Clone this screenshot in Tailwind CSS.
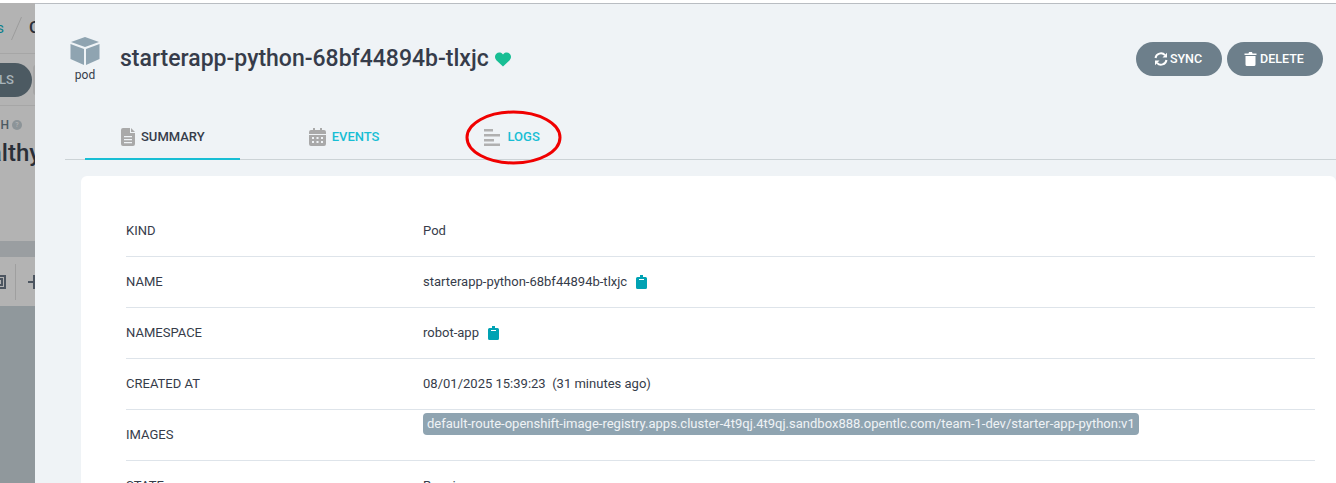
<!DOCTYPE html>
<html lang="en">
	<head>
		<meta charset="UTF-8" />
		<title>Pod details</title>
		<script src="https://cdn.jsdelivr.net/npm/@tailwindcss/browser@4"></script>
	</head>
	<body class="bg-white font-['Roboto',sans-serif] text-[#363c4a]">
		<div class="h-[483px] overflow-hidden pt-[3px]">
			<div class="flex h-[480px] overflow-hidden">
				<!-- dimmed page behind the sliding panel -->
				<div class="w-[35px] shrink-0 overflow-hidden bg-[#b3b3b3] flex flex-col text-[#2a2f38]">
					<div class="h-[51px] w-full flex items-center border-b border-[#a6a6a6] whitespace-nowrap">
						<div class="w-[4px] overflow-hidden flex justify-end text-[15px] text-[#0a7f8c]">s</div>
						<svg class="ml-[7px] shrink-0" width="11" height="23" viewBox="0 0 11 23"><path d="M.5 23 10.500 0" stroke="#9c9c9c" fill="none" /></svg>
						<div class="ml-[7px] w-[6px] overflow-hidden text-[17px] font-medium">C</div>
					</div>
					<div class="h-[52px] w-full flex items-center border-b border-[#a6a6a6]">
						<div class="w-[32px] h-[34px] shrink-0 rounded-r-[17px] bg-[#4c5a62] text-[#a9b4ba] text-[13px] font-medium flex items-center justify-end pr-[18px]">LS</div>
						<div class="w-[3px] h-[30px] shrink-0 ml-[1px] rounded-l-[3px] bg-[#a6a6a6]"></div>
					</div>
					<div class="h-[135px] w-full whitespace-nowrap">
						<div class="mt-[11px] h-[16px] flex items-center text-xs font-medium text-[#4c5a62]">
							<div class="w-[9px] overflow-hidden flex justify-end">H</div>
							<div class="ml-[3px] w-[10px] h-[10px] rounded-full bg-[#8c9498] text-[7px] leading-[10px] text-center text-[#b3b3b3]">?</div>
						</div>
						<div class="mt-[5px] h-[30px] flex justify-end text-[24px] leading-[30px] font-medium">
							<span class="-mr-[6px]">althy</span>
						</div>
					</div>
					<div class="h-[16px] w-full bg-[#9a9ea1]"></div>
					<div class="h-[49px] w-full flex items-center">
						<svg width="6" height="16" viewBox="0 0 6 16" class="shrink-0"><path d="M-4 2H5V14H-4M-4 5H2V11H-4" stroke="#4c5560" stroke-width="2" fill="none" /></svg>
						<div class="ml-[9px] w-[1px] h-[36px] bg-[#9f9f9f] shrink-0"></div>
						<svg width="8" height="14" viewBox="0 0 8 14" class="shrink-0 ml-[12px]"><path d="M0 7H8M6 0V14" stroke="#4c5560" stroke-width="2" fill="none" /></svg>
					</div>
					<div class="flex-1 w-full bg-[#90989c]"></div>
				</div>

				<!-- sliding panel -->
				<div class="flex-1 min-w-0 bg-[#eff3f6] border-t border-[#b9bdc2]">
					<div class="h-[104px] flex items-start justify-between pr-[13px]">
						<div class="flex items-start">
							<div class="w-[85px] pl-[35px] pr-[20px] pt-[32px] flex flex-col items-center">
								<svg class="shrink-0" width="30" height="30" viewBox="0 0 30 30">
									<path d="M15 1 29 6 15 11 1 6Z" fill="#8fa4b1" />
									<path d="M0.500 8 14 13V29L0.500 23Z" fill="#8fa4b1" />
									<path d="M29.500 8 16 13V29L29.500 23Z" fill="#8fa4b1" />
								</svg>
								<div class="text-xs leading-[15px] mt-[2px]">pod</div>
							</div>
							<div class="pt-[40px] flex items-center">
								<h1 class="text-[23px] leading-[29px] font-medium whitespace-nowrap">starterapp-python-68bf44894b-tlxjc</h1>
								<svg class="ml-[6px] mt-[2px]" width="16" height="15" viewBox="0 0 17 15"><path d="M8.500 15 1.400 8.200C-.5 6.200-.4 3 1.400 1.300 3.300-.4 6.200-.3 8 1.600l.5.6.5-.6c1.800-1.900 4.700-2 6.600-.3 1.800 1.700 1.900 4.900 0 6.900Z" fill="#18be94" /></svg>
							</div>
						</div>
						<div class="pt-[38px] flex gap-[5px]">
							<button class="h-[34px] w-[86px] pr-[2px] rounded-[17px] bg-[#6d7f8b] text-white text-[12.5px] font-medium flex items-center justify-center gap-[2px]">
								<svg width="14" height="14" viewBox="0 0 14 14" fill="none" stroke="#fff" stroke-width="2"><path d="M1.500 6A5.500 5.500 0 0 1 11 3.200" /><path d="M12.500 8A5.500 5.500 0 0 1 3 10.800" /><path d="M13 .8V5.400H8.500Z" fill="#fff" stroke="none" /><path d="M1 13.200V8.600H5.500Z" fill="#fff" stroke="none" /></svg>
								SYNC
							</button>
							<button class="h-[34px] w-[96px] pr-[2px] rounded-[17px] bg-[#6d7f8b] text-white text-[12.5px] font-medium flex items-center justify-center gap-[3px]">
								<svg class="-mt-[1px]" width="13" height="15" viewBox="0 0 12 15"><path d="M0 2.500H12V4H0ZM4 2.500 4.500 1H7.500L8 2.500ZM1 5H11V13.500A1.500 1.500 0 0 1 9.500 15H2.500A1.500 1.500 0 0 1 1 13.500Z" fill="#fff" /></svg>
								DELETE
							</button>
						</div>
					</div>

					<div class="ml-[30px] pl-[20px] h-[52px] border-b border-[#ccd3d6] flex gap-[33px] text-[13px] font-medium">
						<div class="pl-[36px] pr-[35px] h-[52px] pt-[8px] border-b-2 border-[#18bed4] flex items-center gap-[6px]">
							<svg width="14" height="18" viewBox="0 0 14 18"><path d="M2 0H9V5H14V16A2 2 0 0 1 12 18H2A2 2 0 0 1 0 16V2A2 2 0 0 1 2 0ZM10 0 14 4H10ZM3 8V9.200H11V8ZM3 11V12.200H11V11ZM3 14V15.200H11V14Z" fill="#a9a9a9" fill-rule="evenodd" /></svg>
							SUMMARY
						</div>
						<div class="px-[36px] h-[52px] pt-[6px] flex items-center gap-[6px] text-[#18bed4]">
							<svg width="17" height="18" viewBox="0 0 17 18"><path d="M4 0H6V2H11V0H13V2H15A2 2 0 0 1 17 4V6H0V4A2 2 0 0 1 2 2H4ZM0 7H17V16A2 2 0 0 1 15 18H2A2 2 0 0 1 0 16ZM3 9V11H5V9ZM7.500 9V11H9.500V9ZM12 9V11H14V9ZM3 13V15H5V13ZM7.500 13V15H9.500V13ZM12 13V15H14V13Z" fill="#a9a9a9" fill-rule="evenodd" /></svg>
							EVENTS
						</div>
						<div class="px-[36px] h-[52px] pt-[6px] flex items-center gap-[7px] text-[#18bed4]">
							<svg width="16" height="17" viewBox="0 0 16 17" fill="#b0b0b0"><rect width="9" height="2.500" y="0" /><rect width="16" height="2.500" y="5" /><rect width="10" height="2.500" y="10" /><rect width="16" height="2.500" y="14.500" /></svg>
							LOGS
						</div>
					</div>

					<div class="ml-[46px] mt-[16px] h-[400px] bg-white rounded-t-[6px] pl-[45px] pr-[21px] pt-[30px] text-[13.02px]">
						<div class="h-[51px] border-b border-[#dee4ea] flex items-center">
							<div class="w-[297px]">KIND</div>
							<div>Pod</div>
						</div>
						<div class="h-[51px] border-b border-[#dee4ea] flex items-center">
							<div class="w-[297px]">NAME</div>
							<div>starterapp-python-68bf44894b-tlxjc</div>
							<svg class="ml-[9px]" width="11" height="14" viewBox="0 0 11 14"><path d="M4 0H7V2H9.500A1.500 1.500 0 0 1 11 3.500V12.500A1.500 1.500 0 0 1 9.500 14H1.500A1.500 1.500 0 0 1 0 12.500V3.500A1.500 1.500 0 0 1 1.500 2H4ZM3 4V5H8V4Z" fill="#00a2b3" fill-rule="evenodd" /></svg>
						</div>
						<div class="h-[51px] border-b border-[#dee4ea] flex items-center">
							<div class="w-[297px]">NAMESPACE</div>
							<div>robot-app</div>
							<svg class="ml-[9px]" width="11" height="14" viewBox="0 0 11 14"><path d="M4 0H7V2H9.500A1.500 1.500 0 0 1 11 3.500V12.500A1.500 1.500 0 0 1 9.500 14H1.500A1.500 1.500 0 0 1 0 12.500V3.500A1.500 1.500 0 0 1 1.500 2H4ZM3 4V5H8V4Z" fill="#00a2b3" fill-rule="evenodd" /></svg>
						</div>
						<div class="h-[51px] border-b border-[#dee4ea] flex items-center">
							<div class="w-[297px]">CREATED AT</div>
							<div class="whitespace-pre">08/01/2025 15:39:23  (31 minutes ago)</div>
						</div>
						<div class="h-[51px] border-b border-[#dee4ea] flex items-center">
							<div class="w-[297px]">IMAGES</div>
							<div class="self-start mt-[3px] h-[22px] leading-[22px] px-[4px] rounded-[4px] bg-[#8fa4b1] text-[#eff3f6] whitespace-nowrap">default-route-openshift-image-registry.apps.cluster-4t9qj.4t9qj.sandbox888.opentlc.com/team-1-dev/starter-app-python:v1</div>
						</div>
						<div class="h-[51px] border-b border-[#dee4ea] flex items-center">
							<div class="w-[297px]">STATE</div>
							<div>Running</div>
						</div>
					</div>
				</div>
			</div>
		</div>
		<!-- hand-drawn highlight over the LOGS tab -->
		<svg class="absolute left-[465px] top-[110px]" width="98" height="56" viewBox="0 0 98 56" fill="none"><ellipse cx="48.500" cy="27.500" rx="46.500" ry="25.500" stroke="#f00000" stroke-width="3" /></svg>
	</body>
</html>
